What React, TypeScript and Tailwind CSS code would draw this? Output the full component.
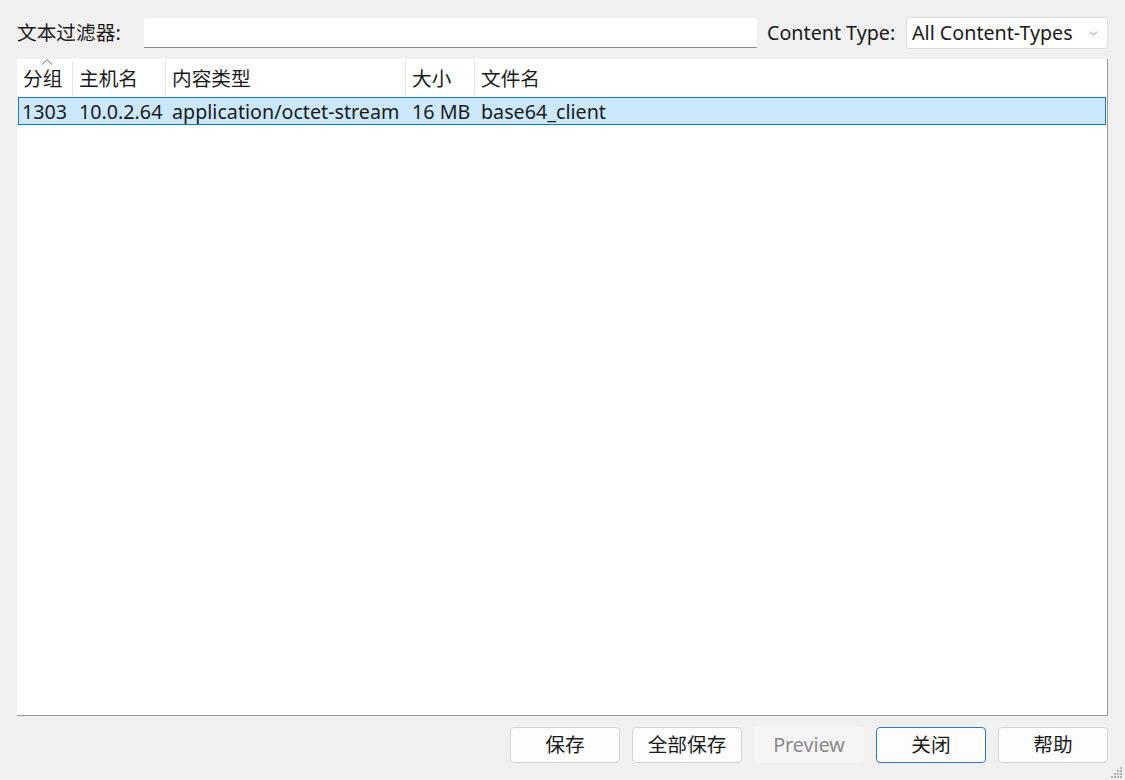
import { ChevronDown } from "lucide-react";

const FONT = "font-['Segoe_UI','Noto_Sans','Noto_Sans_CJK_SC',sans-serif]";

const columns = [
  { label: "分组", width: "w-[56px]" },
  { label: "主机名", width: "w-[93px]" },
  { label: "内容类型", width: "w-[240px]" },
  { label: "大小", width: "w-[69px]" },
  { label: "文件名", width: "flex-1" },
];

const row = ["1303", "10.0.2.64", "application/octet-stream", "16 MB", "base64_client"];

const buttons = [
  { label: "保存" },
  { label: "全部保存" },
  { label: "Preview", disabled: true },
  { label: "关闭", primary: true },
  { label: "帮助" },
];

export default function App() {
  return (
    <div
      className={`${FONT} w-[1125px] h-[780px] bg-[#f0f0f0] text-[19.7px] text-[#1a1a1a] relative overflow-hidden`}
    >
      {/* Filter bar */}
      <div className="flex items-center pt-[17px] pl-[17px] pr-[17px] h-[49px]">
        <span className="w-[127px] leading-none">文本过滤器:</span>
        <div className="w-[613px] h-[30px] bg-white border-b border-[#8a8a8a] rounded-t-[3px]" />
        <span className="ml-[10px] w-[139px] leading-none">Content Type:</span>
        <div className="w-[202px] h-[32px] bg-white border border-[#dcdcdc] rounded-[3px] flex items-center pl-[5px] pr-[7px]">
          <span className="flex-1 leading-none">All Content-Types</span>
          <ChevronDown className="w-[13px] h-[13px] text-[#707070]" strokeWidth={1.5} />
        </div>
      </div>

      {/* List */}
      <div className="mt-[10px] ml-[17px] w-[1091px] h-[657px] bg-white border-r border-b border-[#9a9a9a] flex flex-col">
        <div className="flex h-[38px] relative pt-[2px]">
          {columns.map((c, i) => (
            <div
              key={c.label}
              className={`${c.width} flex items-center pl-[6px] ${
                i < columns.length - 1 ? "border-r border-[#e5e5e5]" : ""
              }`}
            >
              {c.label}
            </div>
          ))}
          <svg className="absolute left-[24px] top-[-1px]" width="12" height="8" viewBox="0 0 12 8">
            <path d="M1 6.5 L6 1.5 L11 6.5" fill="none" stroke="#6a6a6a" strokeWidth="1" />
          </svg>
        </div>
        <div className="flex h-[28px] mx-[1px] bg-[#cce8ff] border border-[#1b76c4] pt-[1px]">
          {row.map((v, i) => (
            <div
              key={i}
              className={`${columns[i].width} flex items-center ${i === 0 ? "pl-[3px] w-[55px]" : "pl-[4px]"} whitespace-nowrap`}
            >
              {v}
            </div>
          ))}
        </div>
      </div>

      {/* Buttons */}
      <div className="flex justify-end gap-[12px] pr-[17px] mt-[11px]">
        {buttons.map((b) => (
          <div
            key={b.label}
            className={`w-[110px] h-[36px] rounded-[4px] flex items-center justify-center ${
              b.disabled
                ? "bg-[#f5f5f5] text-[#8a8a8a]"
                : b.primary
                ? "bg-[#fdfdfd] border border-[#2a78c8]"
                : "bg-[#fdfdfd] border border-[#d4d4d4]"
            }`}
          >
            {b.label}
          </div>
        ))}
      </div>

      {/* Resize grip */}
      <svg className="absolute right-[2px] bottom-[2px]" width="12" height="12" viewBox="0 0 12 12">
        {[
          [9, 1],
          [6, 4],
          [9, 4],
          [3, 7],
          [6, 7],
          [9, 7],
          [0, 10],
          [3, 10],
          [6, 10],
          [9, 10],
        ].map(([x, y], i) => (
          <rect key={i} x={x} y={y} width="2" height="2" fill="#b0b0b0" />
        ))}
      </svg>
    </div>
  );
}
